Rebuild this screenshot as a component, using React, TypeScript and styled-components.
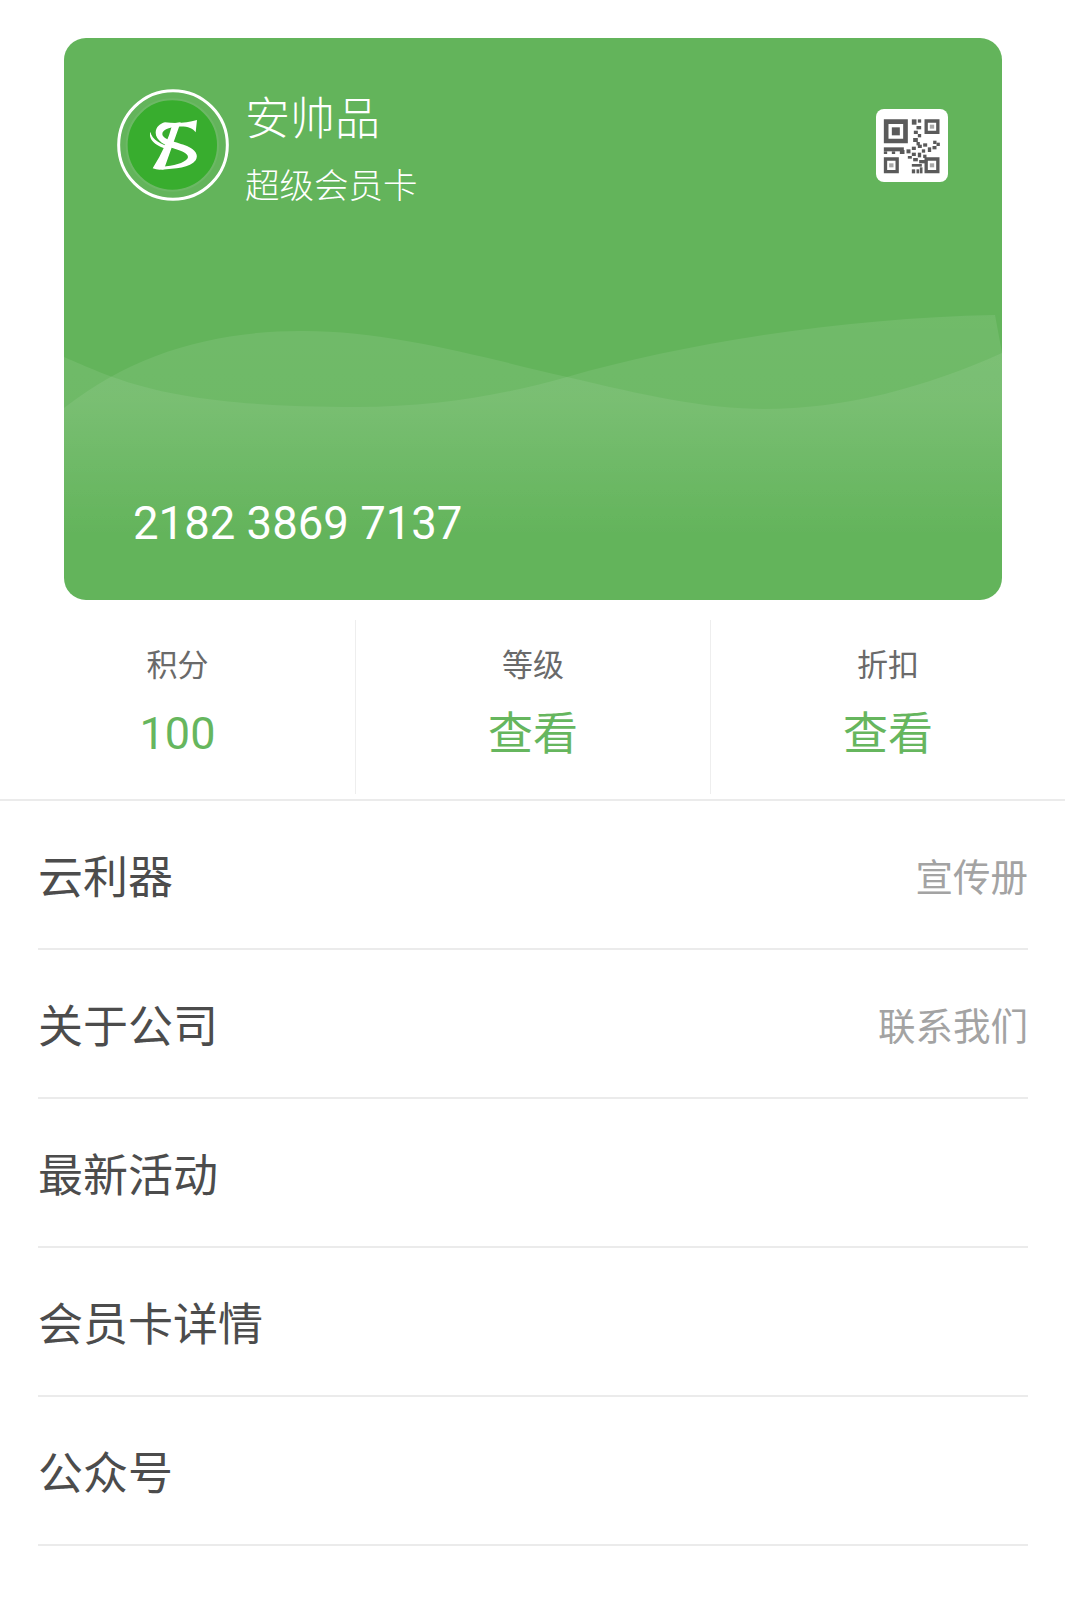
import React, { FC } from 'react'
import styled, { createGlobalStyle } from 'styled-components'

const GlobalStyle = createGlobalStyle`
html, body {
  margin: 0;
  padding: 0;
  background: #fff;
}
body {
  font-family: Roboto, "Noto Sans CJK SC", sans-serif;
}
`

const Page = styled.div`
width: 1065px;
height: 1600px;
padding-top: 38px;
box-sizing: border-box;
overflow: hidden;
background: #fff;
`

const Card = styled.section`
position: relative;
width: 938px;
height: 562px;
margin-left: 64px;
border-radius: 22px;
overflow: hidden;
background: #63b45b;
color: #fff;
display: flex;
flex-direction: column;
justify-content: space-between;
`

const Waves = styled.svg`
position: absolute;
left: 0;
top: 0;
width: 100%;
height: 100%;
`

const CardTop = styled.div`
position: relative;
display: flex;
align-items: flex-start;
padding: 51px 54px 0 53px;
`

const Logo = styled.svg`
width: 112px;
height: 112px;
flex: none;
`

const Titles = styled.div`
flex: 1;
margin-left: 16px;
padding-top: 3px;
`

const Shop = styled.div`
font-size: 45px;
line-height: 56px;
font-weight: 300;
`

const Kind = styled.div`
margin-top: 16px;
font-size: 34.5px;
line-height: 44px;
font-weight: 300;
`

const QrTile = styled.div`
width: 72px;
height: 73px;
margin-top: 20px;
border-radius: 8px;
background: #fff;
svg {
  display: block;
  width: 100%;
  height: 100%;
}
`

const CardNo = styled.div`
position: relative;
padding: 0 0 48px 69px;
font-size: 45.5px;
line-height: 56px;
`

const Stats = styled.ul`
list-style: none;
margin: 20px 0 0;
padding: 0;
height: 174px;
display: grid;
grid-template-columns: 355px 355px 355px;
`

const Stat = styled.li`
display: flex;
flex-direction: column;
align-items: center;
box-sizing: border-box;
padding-top: 27px;
& + & {
  border-left: 1px solid #eee;
}
`

const StatName = styled.span`
font-size: 31px;
line-height: 38px;
font-weight: 400;
color: #6a6a6a;
`

const StatValue = styled.span<{ $numeric?: boolean }>`
margin-top: ${props => (props.$numeric ? '19px' : '20px')};
font-size: 45px;
line-height: 60px;
font-weight: 400;
color: #66b65e;
`

const Menu = styled.ul`
list-style: none;
margin: 5px 0 0;
padding: 0 37px 0 38px;
border-top: 2px solid #ebebeb;
`

const MenuItem = styled.li`
height: 147px;
display: flex;
align-items: center;
justify-content: space-between;
border-bottom: 2px solid #ebebeb;
`

const ItemName = styled.span`
font-size: 45px;
font-weight: 400;
color: #4c4c4c;
`

const ItemHint = styled.span`
font-size: 37.5px;
font-weight: 400;
color: #a3a3a3;
`

const stats = [
  { name: '积分', value: '100', numeric: true },
  { name: '等级', value: '查看' },
  { name: '折扣', value: '查看' },
]

const menu = [
  { name: '云利器', hint: '宣传册' },
  { name: '关于公司', hint: '联系我们' },
  { name: '最新活动' },
  { name: '会员卡详情' },
  { name: '公众号' },
]

const qrCells = [
  [112, 28, 14, 16], [130, 28, 10, 10], [126, 48, 14, 10], [118, 62, 12, 10],
  [130, 72, 10, 10], [116, 84, 14, 12], [126, 96, 10, 10], [112, 110, 12, 10],
  [130, 104, 12, 10], [146, 100, 12, 10], [160, 112, 10, 14], [176, 92, 10, 10],
  [186, 98, 10, 10], [174, 108, 12, 10], [142, 118, 10, 10], [28, 112, 60, 12],
  [28, 124, 10, 8], [52, 124, 10, 8], [76, 120, 14, 12], [96, 118, 12, 12],
  [112, 128, 12, 10], [130, 128, 10, 14], [146, 134, 10, 10], [100, 138, 12, 8],
  [116, 144, 14, 10], [134, 150, 18, 10], [112, 162, 30, 8], [112, 178, 10, 12],
  [126, 178, 8, 12], [136, 172, 8, 18],
]

const CardLogo: FC = () => (
  <Logo viewBox="-9 -3 336 336">
    <circle cx="159" cy="165" r="163" fill="none" stroke="#fff" strokeWidth="9" />
    <circle cx="157" cy="165" r="137" fill="#38ad2e" />
    <circle cx="157" cy="165" r="137" fill="none" stroke="#6cb865" strokeWidth="6" />
    <path fill="#fff" d="M158 100 L182 97 L132 238 Q114 242 98 235 Q140 170 158 100Z" />
    <path fill="#fff" d="M135 97 C165 100 200 100 231 90 L227 127 C218 113 200 108 171 110 C147 112 127 119 127 132 C127 149 171 156 201 168 C226 179 237 195 227 211 C211 233 165 237 124 239 L127 230 C159 228 193 220 203 205 C209 193 189 183 164 176 C134 167 107 150 107 128 C107 112 119 101 135 97Z" />
    <path fill="#fff" d="M91 125 C95 149 125 164 151 171 L151 179 C119 173 83 155 91 125Z" />
  </Logo>
)

const QrCode: FC = () => (
  <svg viewBox="6 -3 213 219">
    <g fill="#5a5a5a">
      <path fillRule="evenodd" d="M28 28h72v72H28z M42 42v44h44V42z" />
      <rect x="52" y="52" width="24" height="24" />
      <path fillRule="evenodd" d="M150 28h45v44h-45z M160 38v24h25V38z" />
      <path fillRule="evenodd" d="M28 142h45v48H28z M38 152v28h25v-28z" />
      <path fillRule="evenodd" d="M150 142h45v48h-45z M160 152v28h25v-28z" />
      {qrCells.map(([x, y, w, h]) => (
        <rect key={`${x}-${y}`} x={x} y={y} width={w} height={h} />
      ))}
    </g>
    <g fill="#a8a8a8">
      <rect x="166" y="44" width="13" height="12" />
      <rect x="44" y="160" width="13" height="12" />
      <rect x="166" y="160" width="13" height="12" />
    </g>
  </svg>
)

const App: FC = () => {
  return (
    <Page>
      <GlobalStyle />
      <Card>
        <Waves viewBox="0 0 938 562" preserveAspectRatio="none">
          <defs>
            <linearGradient id="fade" gradientUnits="userSpaceOnUse" x1="0" y1="270" x2="0" y2="500">
              <stop offset="0" stopColor="#fff" stopOpacity="0.09" />
              <stop offset="0.4" stopColor="#fff" stopOpacity="0.075" />
              <stop offset="0.75" stopColor="#fff" stopOpacity="0.03" />
              <stop offset="1" stopColor="#fff" stopOpacity="0" />
            </linearGradient>
          </defs>
          <path fill="url(#fade)" d="M0 370 C70 315 150 293 238 293 C330 293 420 320 503 339 C580 357 640 371 700 371 C780 371 860 350 938 315 V562 H0Z" />
          <path fill="url(#fade)" d="M0 319 C60 345 110 369 294 369 C370 369 440 357 503 339 C620 305 780 280 931 277 L938 315 V562 H0Z" />
        </Waves>
        <CardTop>
          <CardLogo />
          <Titles>
            <Shop>安帅品</Shop>
            <Kind>超级会员卡</Kind>
          </Titles>
          <QrTile>
            <QrCode />
          </QrTile>
        </CardTop>
        <CardNo>2182 3869 7137</CardNo>
      </Card>
      <Stats>
        {stats.map(s => (
          <Stat key={s.name}>
            <StatName>{s.name}</StatName>
            <StatValue $numeric={s.numeric}>{s.value}</StatValue>
          </Stat>
        ))}
      </Stats>
      <Menu>
        {menu.map(m => (
          <MenuItem key={m.name}>
            <ItemName>{m.name}</ItemName>
            {m.hint && <ItemHint>{m.hint}</ItemHint>}
          </MenuItem>
        ))}
      </Menu>
    </Page>
  )
}

export default App
